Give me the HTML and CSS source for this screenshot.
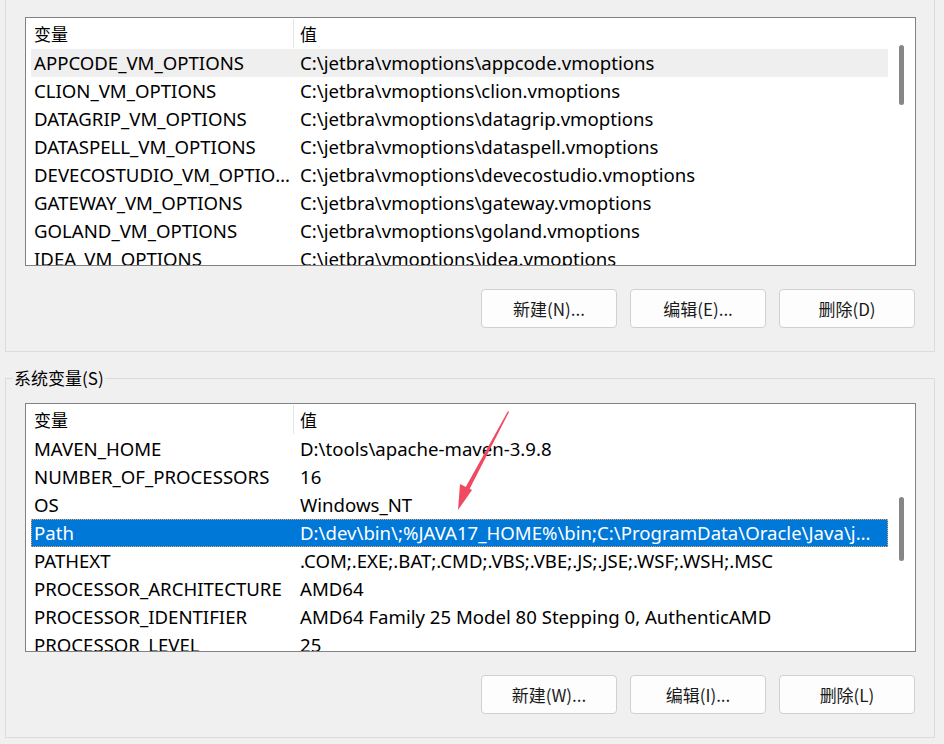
FILE: index.html
```html
<!DOCTYPE html>
<html lang="zh-CN">
<head>
  <meta charset="UTF-8">
  <title>环境变量</title>
  <link rel="stylesheet" href="styles.css">
</head>
<body>
  <div class="group group-user">
    <div class="list">
      <div class="list-body">
        <div class="list-head">
          <div class="col-name">变量</div>
          <div class="col-value">值</div>
        </div>
        <div class="row hover"><div class="col-name">APPCODE_VM_OPTIONS</div><div class="col-value">C:\jetbra\vmoptions\appcode.vmoptions</div></div>
        <div class="row"><div class="col-name">CLION_VM_OPTIONS</div><div class="col-value">C:\jetbra\vmoptions\clion.vmoptions</div></div>
        <div class="row"><div class="col-name">DATAGRIP_VM_OPTIONS</div><div class="col-value">C:\jetbra\vmoptions\datagrip.vmoptions</div></div>
        <div class="row"><div class="col-name">DATASPELL_VM_OPTIONS</div><div class="col-value">C:\jetbra\vmoptions\dataspell.vmoptions</div></div>
        <div class="row"><div class="col-name">DEVECOSTUDIO_VM_OPTIONS</div><div class="col-value">C:\jetbra\vmoptions\devecostudio.vmoptions</div></div>
        <div class="row"><div class="col-name">GATEWAY_VM_OPTIONS</div><div class="col-value">C:\jetbra\vmoptions\gateway.vmoptions</div></div>
        <div class="row"><div class="col-name">GOLAND_VM_OPTIONS</div><div class="col-value">C:\jetbra\vmoptions\goland.vmoptions</div></div>
        <div class="row"><div class="col-name">IDEA_VM_OPTIONS</div><div class="col-value">C:\jetbra\vmoptions\idea.vmoptions</div></div>
      </div>
      <div class="scrollbar"><div class="thumb" style="margin-top:27px;height:60px"></div></div>
    </div>
    <div class="buttons">
      <button class="btn">新建(N)...</button>
      <button class="btn">编辑(E)...</button>
      <button class="btn">删除(D)</button>
    </div>
  </div>

  <fieldset class="group group-system">
    <legend>系统变量(S)</legend>
    <div class="list">
      <div class="list-body">
        <div class="list-head">
          <div class="col-name">变量</div>
          <div class="col-value">值</div>
        </div>
        <div class="row"><div class="col-name">MAVEN_HOME</div><div class="col-value">D:\tools\apache-maven-3.9.8</div></div>
        <div class="row"><div class="col-name">NUMBER_OF_PROCESSORS</div><div class="col-value">16</div></div>
        <div class="row"><div class="col-name">OS</div><div class="col-value">Windows_NT</div></div>
        <div class="row selected"><div class="col-name">Path</div><div class="col-value">D:\dev\bin\;%JAVA17_HOME%\bin;C:\ProgramData\Oracle\Java\javapath;C:\Windows\system32</div></div>
        <div class="row"><div class="col-name">PATHEXT</div><div class="col-value">.COM;.EXE;.BAT;.CMD;.VBS;.VBE;.JS;.JSE;.WSF;.WSH;.MSC</div></div>
        <div class="row"><div class="col-name">PROCESSOR_ARCHITECTURE</div><div class="col-value">AMD64</div></div>
        <div class="row"><div class="col-name">PROCESSOR_IDENTIFIER</div><div class="col-value">AMD64 Family 25 Model 80 Stepping 0, AuthenticAMD</div></div>
        <div class="row"><div class="col-name">PROCESSOR_LEVEL</div><div class="col-value">25</div></div>
      </div>
      <div class="scrollbar"><div class="thumb" style="margin-top:93px;height:64px"></div></div>
    </div>
    <div class="buttons">
      <button class="btn">新建(W)...</button>
      <button class="btn">编辑(I)...</button>
      <button class="btn">删除(L)</button>
    </div>
  </fieldset>

  <!-- 标注箭头 -->
  <svg class="arrow" width="944" height="744" viewBox="0 0 944 744">
    <polygon points="508,411 509,412 467.5,493 463.5,491" fill="#f04a62"/>
    <polygon points="458,510 460,484 472,490" fill="#f04a62"/>
  </svg>
</body>
</html>
```

FILE: styles.css
```css
body {
  margin: 0;
  background: #f0f0f0;
  font-family: "Noto Sans", "Noto Sans CJK SC", sans-serif;
  font-size: 18.6px;
  color: #000;
  position: relative;
  height: 744px;
  overflow: hidden;
}
.group {
  margin: 0 9px 0 5px;
  border: 1px solid #dcdcdc;
}
.group-user {
  border-top: none;
  padding: 17px 18px 23px 19px;
}
.group-system {
  margin-top: 14px;
  padding: 13px 18px 23px 19px;
  min-width: 0;
}
.group-system legend {
  margin-left: -12px;
  padding: 0 1px;
  line-height: 24px;
  font-family: "Noto Sans CJK SC", sans-serif;
  font-size: 17px;
}
.list {
  display: flex;
  height: 247px;
  background: #fff;
  border: 1px solid #828282;
  overflow: hidden;
}
.list-body {
  flex: 1;
  min-width: 0;
}
.list-head {
  display: flex;
  height: 31px;
  align-items: center;
}
.list-head .col-name {
  width: 259px;
  padding-left: 8px;
  border-right: 1px solid #e5e5e5;
  height: 29px;
  line-height: 29px;
  font-family: "Noto Sans CJK SC", sans-serif;
  font-size: 17px;
}
.list-head .col-value {
  padding-left: 6px;
  font-family: "Noto Sans CJK SC", sans-serif;
  font-size: 17px;
}
.row {
  display: flex;
  height: 28px;
  line-height: 28px;
  margin-left: 5px;
  white-space: nowrap;
}
.row .col-name {
  width: 259px;
  padding-left: 3px;
  overflow: hidden;
  text-overflow: ellipsis;
}
.row .col-value {
  flex: 1;
  min-width: 0;
  padding-left: 7px;
  padding-right: 8px;
  overflow: hidden;
  text-overflow: ellipsis;
}
.row.hover {
  background: #efefef;
}
.row.selected {
  background: #0078d7;
  color: #fff;
  outline: 1px dotted #f3a35a;
  outline-offset: -1px;
}
.scrollbar {
  width: 27px;
  flex-shrink: 0;
}
.thumb {
  width: 5px;
  margin-left: 11px;
  border-radius: 3px;
  background: #868686;
}
.buttons {
  display: flex;
  justify-content: flex-end;
  gap: 13px;
  margin-top: 23px;
  padding-right: 1px;
}
.btn {
  width: 136px;
  height: 39px;
  background: #fdfdfd;
  border: 1px solid #d0d0d0;
  border-radius: 4px;
  font-family: "Noto Sans CJK SC", sans-serif;
  font-size: 17px;
  color: #1a1a1a;
  padding: 0;
}
.arrow {
  position: absolute;
  left: 0;
  top: 0;
  pointer-events: none;
}
```
